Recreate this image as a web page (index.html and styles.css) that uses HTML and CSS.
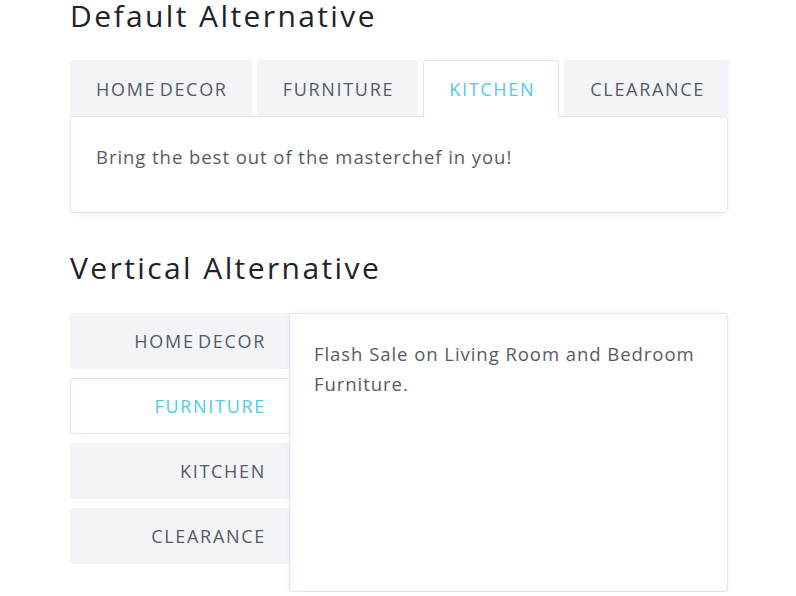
FILE: index.html
```html
<!DOCTYPE html>
<html lang="en">
<head>
<meta charset="utf-8">
<title>Tabs</title>
<link rel="stylesheet" href="styles.css">
</head>
<body>
<div class="page">
  <h2 class="title">Default Alternative</h2>
  <div class="htabs">
    <div class="htab-row">
      <div class="tab">HOME DECOR</div>
      <div class="tab">FURNITURE</div>
      <div class="tab active">KITCHEN</div>
      <div class="tab">CLEARANCE</div>
    </div>
    <div class="panel hpanel">
      <p>Bring the best out of the masterchef in you!</p>
    </div>
  </div>

  <h2 class="title title2">Vertical Alternative</h2>
  <div class="vtabs">
    <div class="vtab-col">
      <div class="vtab">HOME DECOR</div>
      <div class="vtab active">FURNITURE</div>
      <div class="vtab">KITCHEN</div>
      <div class="vtab">CLEARANCE</div>
    </div>
    <div class="panel vpanel">
      <p>Flash Sale on Living Room and Bedroom Furniture.</p>
    </div>
  </div>
</div>
</body>
</html>
```
FILE: styles.css
```css
html, body {
  margin: 0;
  padding: 0;
  background: #ffffff;
}
body {
  font-family: "Open Sans", "Noto Sans", sans-serif;
  color: #555b66;
}
.page {
  width: 658px;
  padding-left: 70px;
}
.title {
  margin: 0;
  font-weight: 400;
  font-size: 30px;
  line-height: 32px;
  letter-spacing: 2.4px;
  color: #1f2228;
  height: 32px;
  white-space: nowrap;
}
.htabs {
  margin-top: 28px;
}
.htab-row {
  display: flex;
  gap: 5px;
  align-items: flex-end;
}
.tab {
  height: 56px;
  padding: 0 23px 0 25px;
  background: #f2f4f8;
  border: 1px solid #f2f4f8;
  border-bottom: none;
  border-radius: 4px 4px 0 0;
  display: flex;
  align-items: center;
  font-size: 18px;
  letter-spacing: 1.7px;
  word-spacing: -3px;
  color: #555b66;
  box-sizing: border-box;
  white-space: nowrap;
}
.tab.active {
  background: #ffffff;
  border-color: #d9e5f8;
  color: #4fcaf0;
  height: 57px;
  margin-bottom: -1px;
  position: relative;
  z-index: 2;
}
.panel {
  border: 1px solid #d9e5f8;
  border-radius: 4px;
  background: #fff;
  box-shadow: 0 1px 4px rgba(60, 90, 160, 0.08);
  box-sizing: border-box;
}
.hpanel {
  border-top-left-radius: 0;
  height: 97px;
  padding: 25px 25px;
}
.panel p {
  margin: 0;
  font-size: 18.5px;
  line-height: 30px;
  letter-spacing: 0.95px;
}
.title2 {
  margin-top: 39px;
}
.vtabs {
  margin-top: 29px;
  display: flex;
}
.vtab-col {
  width: 220px;
  display: flex;
  flex-direction: column;
  gap: 9px;
  margin-right: -1px;
}
.vtab {
  height: 56px;
  padding: 0 24px 0 25px;
  background: #f2f4f8;
  border: 1px solid #f2f4f8;
  border-right: none;
  border-radius: 4px 0 0 4px;
  display: flex;
  align-items: center;
  justify-content: flex-end;
  font-size: 18px;
  letter-spacing: 1.7px;
  word-spacing: -3px;
  color: #555b66;
  box-sizing: border-box;
  white-space: nowrap;
}
.vtab.active {
  background: #ffffff;
  border-color: #d9e5f8;
  color: #4fcaf0;
}
.vpanel {
  width: 439px;
  height: 279px;
  padding: 25px 24px;
  position: relative;
  z-index: 1;
  border-top-left-radius: 0;
  border-bottom-left-radius: 4px;
}
```
